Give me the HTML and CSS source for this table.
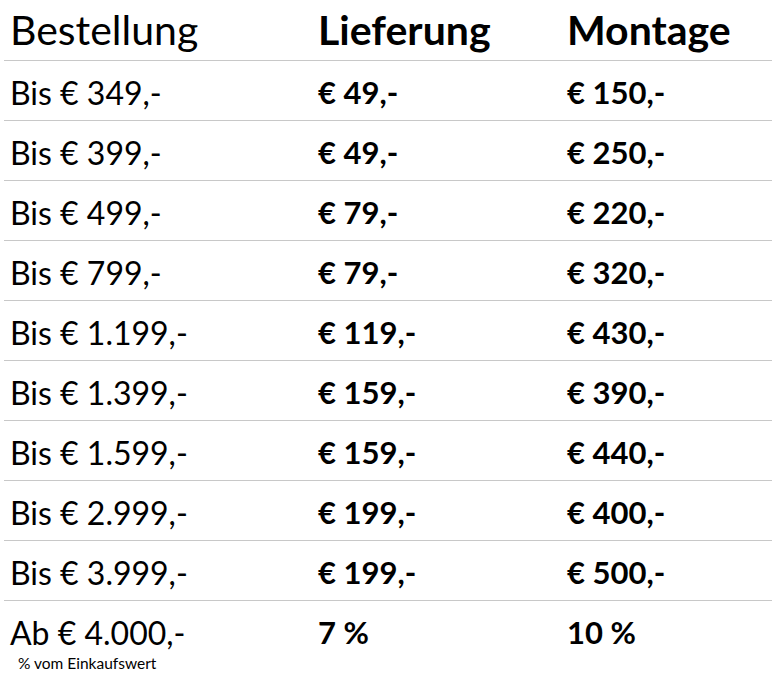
FILE: index.html
```html
<!DOCTYPE html>
<html lang="de">
<head>
<meta charset="utf-8">
<link rel="stylesheet" href="styles.css">
</head>
<body>
<table class="prices">
  <thead>
    <tr>
      <th class="col-order">Bestellung</th>
      <th class="col-strong">Lieferung</th>
      <th class="col-strong">Montage</th>
    </tr>
  </thead>
  <tbody>
    <tr><td>Bis € 349,-</td><td class="val">€ 49,-</td><td class="val">€ 150,-</td></tr>
    <tr><td>Bis € 399,-</td><td class="val">€ 49,-</td><td class="val">€ 250,-</td></tr>
    <tr><td>Bis € 499,-</td><td class="val">€ 79,-</td><td class="val">€ 220,-</td></tr>
    <tr><td>Bis € 799,-</td><td class="val">€ 79,-</td><td class="val">€ 320,-</td></tr>
    <tr><td>Bis € 1.199,-</td><td class="val">€ 119,-</td><td class="val">€ 430,-</td></tr>
    <tr><td>Bis € 1.399,-</td><td class="val">€ 159,-</td><td class="val">€ 390,-</td></tr>
    <tr><td>Bis € 1.599,-</td><td class="val">€ 159,-</td><td class="val">€ 440,-</td></tr>
    <tr><td>Bis € 2.999,-</td><td class="val">€ 199,-</td><td class="val">€ 400,-</td></tr>
    <tr><td>Bis € 3.999,-</td><td class="val">€ 199,-</td><td class="val">€ 500,-</td></tr>
    <tr class="last"><td>Ab € 4.000,-<div class="note">% vom Einkaufswert</div></td><td class="val">7 %</td><td class="val">10 %</td></tr>
  </tbody>
</table>
</body>
</html>
```

FILE: styles.css
```css
html, body {
  margin: 0;
  padding: 0;
  background: #fff;
}
body {
  font-family: Lato, "Open Sans", sans-serif;
  color: #000;
}
.prices {
  border-collapse: collapse;
  table-layout: fixed;
  width: 768px;
  margin-left: 4px;
}
.prices th,
.prices td {
  text-align: left;
  vertical-align: top;
  padding: 0 0 0 6px;
}
.prices th {
  font-size: 41px;
  line-height: 60px;
  font-weight: 400;
}
.prices th.col-strong {
  font-weight: 700;
}
.prices th:nth-child(1) { width: 302px; }
.prices th:nth-child(2) { width: 243px; }
.prices tbody tr {
  border-top: 1px solid #c8c8c8;
}
.prices td {
  padding-top: 4px;
  font-size: 32px;
  line-height: 55px;
  white-space: nowrap;
}
.prices td.val {
  font-size: 31px;
  font-weight: 700;
}
.note {
  font-size: 15.5px;
  line-height: 16px;
  margin-top: -5px;
  padding-left: 8px;
}
```
